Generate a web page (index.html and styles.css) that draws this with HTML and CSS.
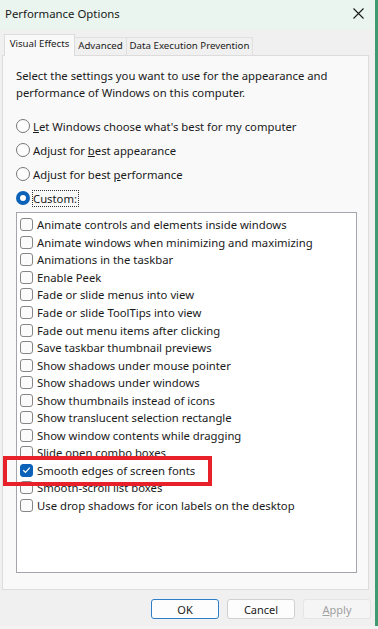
FILE: index.html
```html
<!DOCTYPE html>
<html>
<head>
<meta charset="utf-8">
<link rel="stylesheet" href="styles.css">
</head>
<body>
<div class="window">
  <div class="titlebar">
    <span class="title">Performance Options</span>
    <svg class="close" width="11" height="11" viewBox="0 0 11 11"><path d="M0.5 0.5 L10.5 10.5 M10.5 0.5 L0.5 10.5" stroke="#1a1a1a" stroke-width="1.1" fill="none"/></svg>
  </div>
  <div class="tabs">
    <div class="tab active t1">Visual Effects</div>
    <div class="tab t2">Advanced</div>
    <div class="tab t3">Data Execution Prevention</div>
  </div>
  <div class="panel">
    <p class="desc">Select the settings you want to use for the appearance and<br>performance of Windows on this computer.</p>
    <div class="radios">
      <div class="radio"><span class="circle"></span><span><u>L</u>et Windows choose what's best for my computer</span></div>
      <div class="radio"><span class="circle"></span><span>Adjust for <u>b</u>est appearance</span></div>
      <div class="radio"><span class="circle"></span><span>Adjust for best <u>p</u>erformance</span></div>
      <div class="radio"><span class="circle on"></span><span class="focus">Custom:</span></div>
    </div>
    <div class="listbox">
      <div class="item"><span class="box"></span>Animate controls and elements inside windows</div>
      <div class="item"><span class="box"></span>Animate windows when minimizing and maximizing</div>
      <div class="item"><span class="box"></span>Animations in the taskbar</div>
      <div class="item"><span class="box"></span>Enable Peek</div>
      <div class="item"><span class="box"></span>Fade or slide menus into view</div>
      <div class="item"><span class="box"></span>Fade or slide ToolTips into view</div>
      <div class="item"><span class="box"></span>Fade out menu items after clicking</div>
      <div class="item"><span class="box"></span>Save taskbar thumbnail previews</div>
      <div class="item"><span class="box"></span>Show shadows under mouse pointer</div>
      <div class="item"><span class="box"></span>Show shadows under windows</div>
      <div class="item"><span class="box"></span>Show thumbnails instead of icons</div>
      <div class="item"><span class="box"></span>Show translucent selection rectangle</div>
      <div class="item"><span class="box"></span>Show window contents while dragging</div>
      <div class="item"><span class="box"></span>Slide open combo boxes</div>
      <div class="item"><span class="box checked"><svg width="9" height="8" viewBox="0 0 9 8"><path d="M1.2 4.2 L3.5 6.3 L7.8 1.6" stroke="#fff" stroke-width="1.2" fill="none"/></svg></span>Smooth edges of screen fonts</div>
      <div class="item"><span class="box"></span>Smooth-scroll list boxes</div>
      <div class="item"><span class="box"></span>Use drop shadows for icon labels on the desktop</div>
      <div class="highlight"></div>
    </div>
  </div>
  <div class="buttons">
    <button class="btn default">OK</button>
    <button class="btn">Cancel</button>
    <button class="btn disabled"><u>A</u>pply</button>
  </div>
</div>
</body>
</html>
```
FILE: styles.css
```css
* { box-sizing: border-box; }
html, body { margin: 0; padding: 0; }
body {
  width: 378px;
  height: 629px;
  background: #f3f3f3;
  font-family: "Noto Sans", "Open Sans", sans-serif;
  font-size: 11.3px;
  color: #1a1a1a;
  overflow: hidden;
}
.window {
  width: 378px;
  height: 626px;
  background: #f0f0f0;
  border-right: 3px solid #3f9a72;
  display: flex;
  flex-direction: column;
}
.titlebar {
  height: 30px;
  background: #e9f5ee;
  display: flex;
  align-items: center;
  justify-content: space-between;
  padding: 0 11px 4px 5px;
}
.title { font-size: 11.4px; color: #1a1a1a; }
.close { margin-top: 0; }
.tabs {
  display: flex;
  align-items: flex-end;
  padding: 4px 0 0 4px;
  height: 25px;
  position: relative;
  z-index: 1;
}
.tab {
  height: 18px;
  font-size: 9.7px;
  line-height: 16px;
  text-align: center;
  white-space: nowrap;
  background: #f0f0f0;
  border: 1px solid #e0e0e0;
  border-bottom: none;
}
.t1 { width: 71px; }
.t2 { width: 52px; }
.t3 { width: 126px; }
.tab.active {
  height: 22px;
  background: #f9f9f9;
  border-color: #dcdcdc;
  line-height: 18px;
  margin-bottom: -1px;
}
.tab + .tab { border-left: none; }
.panel {
  margin: 0 6px 0 2px;
  height: 535px;
  background: #f9f9f9;
  border: 1px solid #dcdcdc;
  padding: 11px 13px 0 13px;
  display: flex;
  flex-direction: column;
}
.desc {
  margin: 0;
  line-height: 17px;
  white-space: nowrap;
}
.radios {
  margin-top: 13px;
  display: flex;
  flex-direction: column;
}
.radio {
  height: 24px;
  display: flex;
  align-items: center;
  gap: 3px;
}
.circle {
  width: 14px;
  height: 14px;
  border-radius: 50%;
  border: 1px solid #777;
  background: #fdfdfd;
}
.circle.on {
  border: 4px solid #0b62b8;
  background: #fff;
}
.focus {
  outline: 1px dotted #333;
  outline-offset: 0;
  padding: 0 1px 0 0;
}
.listbox {
  margin-top: 2px;
  width: 341px;
  height: 361px;
  background: #fff;
  border: 1px solid #a5a5ad;
  padding: 3px 0 0 3px;
  position: relative;
}
.item {
  height: 17.55px;
  display: flex;
  align-items: center;
  gap: 4px;
  white-space: nowrap;
}
.box {
  width: 13px;
  height: 13px;
  border: 1px solid #868686;
  border-radius: 3px;
  background: #fbfbfb;
  display: flex;
  align-items: center;
  justify-content: center;
}
.box.checked {
  background: #0b62b8;
  border-color: #0b62b8;
}
.highlight {
  position: absolute;
  left: -14px;
  top: 243px;
  width: 209px;
  height: 30px;
  border: 4px solid #e8202a;
}
.buttons {
  display: flex;
  justify-content: flex-end;
  gap: 8px;
  padding: 9px 4px 0 0;
}
.btn {
  width: 68px;
  height: 20px;
  font-family: inherit;
  font-size: 11px;
  color: #1a1a1a;
  background: #fdfdfd;
  border: 1px solid #d0d0d0;
  border-radius: 3px;
  padding: 0;
}
.btn.default { border: 1px solid #2d7fc9; }
.btn.disabled { color: #a0a0a0; background: #f5f5f5; border-color: #e5e5e5; }
```
